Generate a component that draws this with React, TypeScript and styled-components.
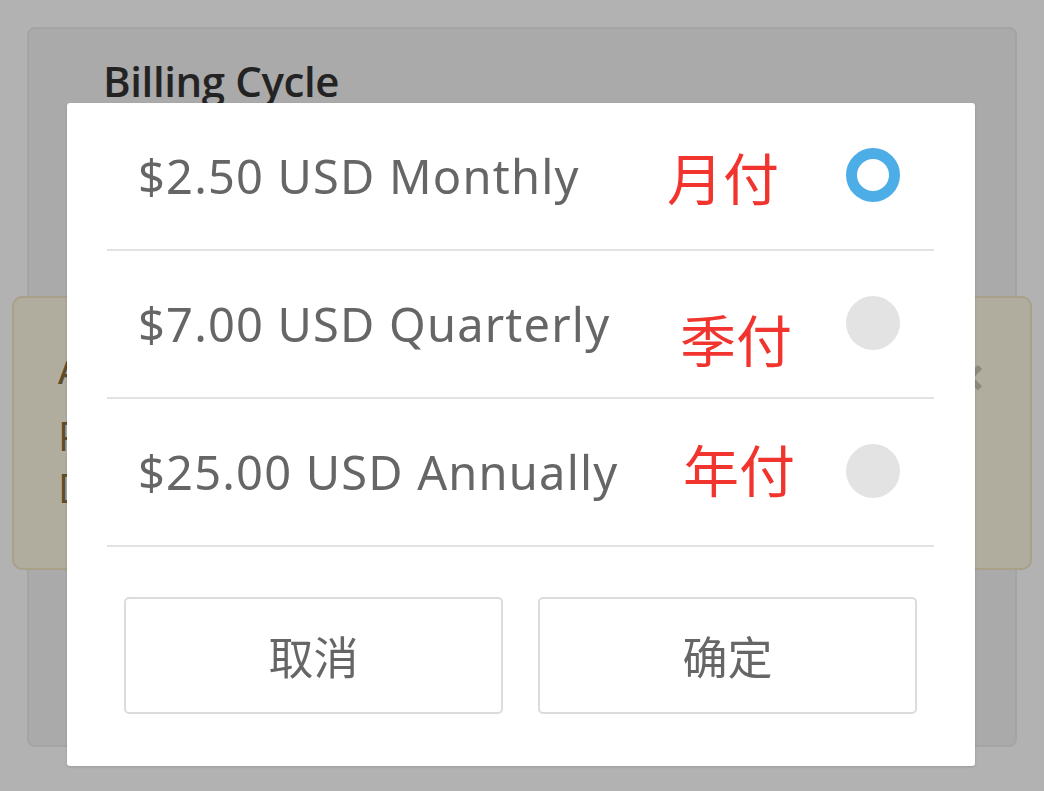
import React from "react";
import styled, { createGlobalStyle } from "styled-components";

const GlobalStyle = createGlobalStyle`
  html, body {
    margin: 0;
    padding: 0;
    background: #ffffff;
    overflow: hidden;
  }
  * { box-sizing: border-box; }
`;

const Page = styled.div`
  width: 1044px;
  height: 791px;
  padding: 27px;
  background: #ffffff;
  font-family: "Open Sans", "Noto Sans", sans-serif;
`;

const Card = styled.section`
  height: 720px;
  background: #f4f4f4;
  border: 2px solid #ebebeb;
  border-radius: 8px;
  padding: 26px 0 0 74px;
  display: flex;
  flex-direction: column;
`;

const Title = styled.h2`
  margin: 0;
  font-size: 42px;
  font-weight: 600;
  line-height: 52px;
  color: #333333;
  letter-spacing: -0.4px;
`;

const Alert = styled.div`
  margin: 189px -17px 0 -91px;
  height: 274px;
  background: #fcf8e3;
  border: 2px solid #f2e6c4;
  border-radius: 10px;
  padding: 46px 44px 0 44px;
  display: flex;
  justify-content: space-between;
  color: #8a6d3b;
`;

const AlertText = styled.div`
  display: flex;
  flex-direction: column;
`;

const AlertHeading = styled.strong`
  font-size: 32px;
  line-height: 56px;
  font-weight: 600;
  margin-bottom: 10px;
`;

const AlertLine = styled.span`
  font-size: 40px;
  line-height: 52px;
`;

const CloseMark = styled.span`
  font-size: 58px;
  font-weight: 700;
  line-height: 56px;
  color: #000;
  opacity: 0.2;
  margin-top: 4px;
`;

const Overlay = styled.div`
  position: fixed;
  inset: 0;
  background: rgba(0, 0, 0, 0.3);
`;

const Dialog = styled.div`
  position: fixed;
  left: 67px;
  top: 103px;
  width: 908px;
  height: 663px;
  background: #ffffff;
  border-radius: 3px;
  box-shadow: 0 1px 3px rgba(0, 0, 0, 0.15);
  padding: 0 41px 0 40px;
  display: flex;
  flex-direction: column;
`;

const OptionList = styled.div`
  display: flex;
  flex-direction: column;
`;

const Option = styled.label`
  height: 148px;
  border-bottom: 2px solid #e2e2e2;
  padding: 0 34px 0 31px;
  display: flex;
  align-items: center;
  cursor: pointer;
`;

const OptionLabel = styled.span`
  width: 529px;
  flex: none;
  font-family: "Noto Sans", "Open Sans", sans-serif;
  font-size: 47px;
  line-height: 58px;
  color: #666666;
  letter-spacing: 1.2px;
  white-space: nowrap;
`;

const Note = styled.span<{ $dx: number; $dy: number }>`
  font-family: "Noto Sans CJK SC", sans-serif;
  font-size: 56px;
  line-height: 60px;
  color: #f2342e;
  margin-left: ${(p) => p.$dx}px;
  margin-top: ${(p) => p.$dy}px;
`;

const Radio = styled.span<{ $checked: boolean }>`
  margin-left: auto;
  width: 54px;
  height: 54px;
  flex: none;
  border-radius: 50%;
  background: ${(p) => (p.$checked ? "#ffffff" : "#e3e3e3")};
  border: ${(p) => (p.$checked ? "11px solid #4dade6" : "none")};
  margin-top: -2px;
`;

const Actions = styled.div`
  display: grid;
  grid-template-columns: 379px 379px;
  gap: 35px;
  padding: 50px 0 0 17px;
`;

const ActionButton = styled.button`
  height: 117px;
  background: #ffffff;
  border: 2px solid #dcdcdc;
  border-radius: 5px;
  font-family: "Noto Sans CJK SC", sans-serif;
  font-size: 45px;
  color: #666666;
  cursor: pointer;
  padding: 0;
`;

const options = [
  { label: "$2.50 USD Monthly", note: "月付", dx: 0, dy: 0, checked: true },
  { label: "$7.00 USD Quarterly", note: "季付", dx: 13, dy: 28, checked: false },
  { label: "$25.00 USD Annually", note: "年付", dx: 16, dy: -8, checked: false },
];

export default function App() {
  return (
    <>
      <GlobalStyle />
      <Page>
        <Card>
          <Title>Billing Cycle</Title>
          <Alert>
            <AlertText>
              <AlertHeading>Auto-renew</AlertHeading>
              <AlertLine>Plan</AlertLine>
              <AlertLine>Due</AlertLine>
            </AlertText>
            <CloseMark>×</CloseMark>
          </Alert>
        </Card>
      </Page>
      <Overlay />
      <Dialog role="dialog">
        <OptionList>
          {options.map((o) => (
            <Option key={o.label}>
              <OptionLabel>{o.label}</OptionLabel>
              <Note $dx={o.dx} $dy={o.dy}>{o.note}</Note>
              <Radio $checked={o.checked} />
            </Option>
          ))}
        </OptionList>
        <Actions>
          <ActionButton>取消</ActionButton>
          <ActionButton>确定</ActionButton>
        </Actions>
      </Dialog>
    </>
  );
}
